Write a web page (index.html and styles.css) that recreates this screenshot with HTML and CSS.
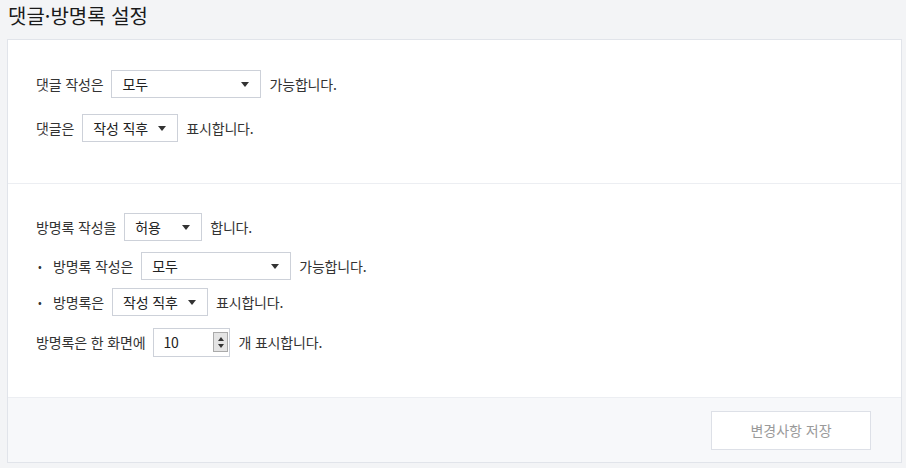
FILE: index.html
```html
<!DOCTYPE html>
<html lang="ko">
<head>
<meta charset="utf-8">
<link rel="stylesheet" href="styles.css">
</head>
<body>
<h1 class="title">댓글·방명록 설정</h1>
<div class="panel">
  <section class="sec sec-first">
    <div class="row">
      <span>댓글 작성은</span>
      <div class="select w150"><span>모두</span><i class="arrow"></i></div>
      <span>가능합니다.</span>
    </div>
    <div class="row r2">
      <span>댓글은</span>
      <div class="select w96"><span>작성 직후</span><i class="arrow"></i></div>
      <span>표시합니다.</span>
    </div>
  </section>
  <section class="sec sec-second">
    <div class="row">
      <span>방명록 작성을</span>
      <div class="select w78"><span>허용</span><i class="arrow"></i></div>
      <span>합니다.</span>
    </div>
    <div class="row sub m11">
      <span class="bullet">•</span>
      <span>방명록 작성은</span>
      <div class="select w150"><span>모두</span><i class="arrow"></i></div>
      <span>가능합니다.</span>
    </div>
    <div class="row sub m8">
      <span class="bullet">•</span>
      <span>방명록은</span>
      <div class="select w96"><span>작성 직후</span><i class="arrow"></i></div>
      <span>표시합니다.</span>
    </div>
    <div class="row m12">
      <span>방명록은 한 화면에</span>
      <div class="number"><span>10</span>
        <span class="spin"><i class="up"></i><i class="down"></i></span>
      </div>
      <span>개 표시합니다.</span>
    </div>
  </section>
  <footer class="foot">
    <button class="save" type="button">변경사항 저장</button>
  </footer>
</div>
</body>
</html>
```
FILE: styles.css
```css
* { box-sizing: border-box; }
html, body { margin: 0; padding: 0; }
body {
  background: #f3f4f6;
  font-family: "Noto Sans CJK KR", "Noto Sans", sans-serif;
  color: #333;
  font-size: 14px;
  letter-spacing: -0.15px;
  width: 906px;
  height: 468px;
  overflow: hidden;
}
.title {
  margin: 0;
  padding: 3px 0 0 8px;
  height: 39px;
  font-size: 20px;
  font-weight: 400;
  letter-spacing: 0;
  color: #1a1a1a;
  line-height: 26px;
}
.panel {
  margin-left: 7px;
  width: 895px;
  background: #fff;
  border: 1px solid #e1e4ea;
}
.sec { padding: 30px 0 0 28px; }
.sec-first { height: 144px; border-bottom: 1px solid #eceef2; }
.sec-second { height: 213px; padding-top: 29px; }
.row {
  display: flex;
  align-items: center;
  gap: 8px;
  height: 28px;
  line-height: 28px;
}
.r2 { margin-top: 16px; }
.m11 { margin-top: 11px; }
.m8 { margin-top: 8px; }
.m12 { margin-top: 12px; }
.sub { padding-left: 2px; }
.bullet { width: 7px; font-size: 11px; }
.select {
  height: 28px;
  border: 1px solid #cdd1d9;
  background: #fff;
  display: flex;
  align-items: center;
  justify-content: space-between;
  padding: 0 10px 0 10px;
  color: #222;
}
.w150 { width: 150px; }
.w96 { width: 96px; }
.w78 { width: 78px; }
.arrow {
  width: 0; height: 0;
  border-left: 4px solid transparent;
  border-right: 4px solid transparent;
  border-top: 5px solid #333;
  margin-right: 1px;
}
.number {
  width: 77px;
  height: 29px;
  border: 1px solid #cdd1d9;
  display: flex;
  align-items: center;
  justify-content: space-between;
  padding: 0 0 0 9px;
  color: #222;
}
.spin {
  width: 15px;
  height: 20px;
  margin-right: 1px;
  background: #e4e4e4;
  border: 1px solid #aaa;
  display: flex;
  flex-direction: column;
  align-items: center;
  justify-content: space-around;
  padding: 2px 0;
}
.spin i { width: 0; height: 0; border-left: 3px solid transparent; border-right: 3px solid transparent; }
.spin .up { border-bottom: 4px solid #333; }
.spin .down { border-top: 4px solid #333; }
.foot {
  background: #f7f8fa;
  border-top: 1px solid #eceef2;
  height: 65px;
  display: flex;
  justify-content: flex-end;
  align-items: center;
  padding-right: 30px;
}
.save {
  width: 160px;
  height: 39px;
  background: #fff;
  border: 1px solid #dde0e7;
  color: #9a9a9a;
  font-family: inherit;
  font-size: 14px;
}
```
